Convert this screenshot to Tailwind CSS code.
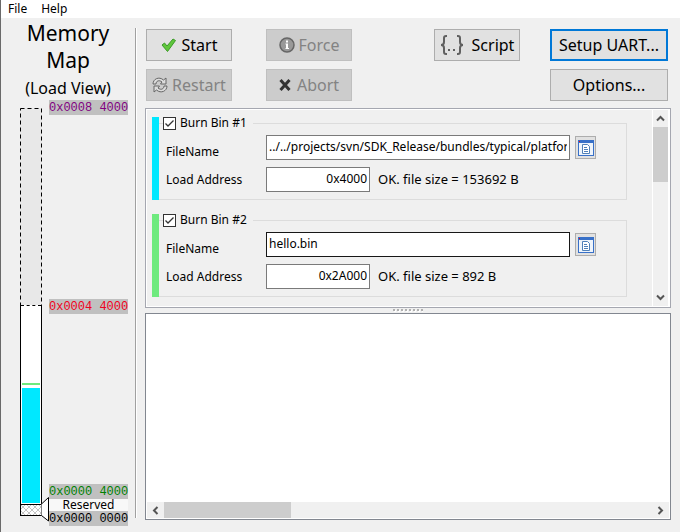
<!DOCTYPE html>
<html lang="en">
<head>
<meta charset="utf-8">
<title>Memory Map</title>
<script src="https://cdn.jsdelivr.net/npm/@tailwindcss/browser@4"></script>
</head>
<body class="flex h-screen flex-col border-l border-[#6a6a6a] bg-[#f0f0f0] font-['Noto_Sans','Noto_Sans_CJK_SC',sans-serif] text-xs text-black">
<nav class="flex h-[18px] shrink-0 items-center gap-3.5 bg-white px-[7px]">
  <button type="button">File</button>
  <button type="button">Help</button>
</nav>
<div class="flex min-h-0 flex-1">
  <aside class="flex w-[134px] shrink-0 flex-col pb-1.5">
    <header class="h-[82px] shrink-0 pt-0.5 text-center">
      <h1 class="text-[21px] leading-[27px]">Memory<br>Map</h1>
      <p class="text-base leading-7">(Load View)</p>
    </header>
    <div class="flex min-h-0 flex-1 pl-[19px]">
      <div class="relative mt-2 mb-[10px] flex w-[22px] flex-col">
        <svg class="min-h-0 w-full flex-[197] bg-[#e8e8e8]" aria-hidden="true"><rect x="0.5" y="0.5" width="21" height="400" fill="none" stroke="#000" stroke-dasharray="4 3"/></svg>
        <div class="flex min-h-0 flex-[199] flex-col border-x border-black bg-white px-px">
          <div class="-mx-px mb-auto border-t border-dashed border-black"></div>
          <div class="mb-[3px] h-0.5 bg-[#6eea7e]"></div>
          <div class="mb-px h-[115px] bg-[#00e8ff]"></div>
        </div>
        <svg class="h-3 w-full shrink-0" viewBox="0 0 22 12" aria-hidden="true">
          <rect x=".5" y=".5" width="21" height="11" fill="#fff" stroke="#000"/>
          <path d="M1 5l4-4M1 11L11 1M7 11L17 1M13 11l8-8M19 11l2-2M1 7l4 4M1 1l10 10M7 1l10 10M13 1l8 8M19 1l2 2" stroke="#b4b4b4" stroke-width=".8" fill="none"/>
        </svg>
        <svg class="absolute -bottom-1.5 left-[21px] h-[26px] w-2" viewBox="0 0 8 26" aria-hidden="true"><path d="M.5 8L7.500 1.500V25L.5 19.500" fill="#fff" stroke="#000"/></svg>
      </div>
      <div class="ml-[7px] flex w-[79px] flex-col font-['Liberation_Mono',monospace] leading-[14px] whitespace-nowrap">
        <div class="bg-[#c0c0c0] pt-px text-[#800080]">0x0008 4000</div>
        <div class="flex-[184]"></div>
        <div class="bg-[#c0c0c0] pt-px text-[#f00020]">0x0004 4000</div>
        <div class="flex-[170]"></div>
        <div class="bg-[#c0c0c0] pt-px text-[#008000]">0x0000 4000</div>
        <div class="h-3 bg-[#f8f8f8] text-center font-['Noto_Sans',sans-serif] leading-3">Reserved</div>
        <div class="bg-[#c0c0c0] pt-px">0x0000 0000</div>
      </div>
    </div>
  </aside>
  <div class="mt-2.5 mb-3.5 w-0.5 border-l border-[#a0a0a0] bg-white"></div>
  <main class="flex min-w-0 flex-1 flex-col pt-[11px] pr-[9px] pb-3 pl-2">
    <div class="mr-[3px] ml-px flex shrink-0 justify-between text-base">
      <div class="grid grid-cols-[86px_86px] gap-x-[34px] gap-y-2">
        <button type="button" class="flex h-8 items-center justify-center gap-1.5 border border-[#adadad] bg-[#e1e1e1]">
          <svg class="size-[15px]" viewBox="0 0 15 15" aria-hidden="true"><path d="M1 7l2.500-2L6 8l6-7 2.500 1.500L6.500 13.500z" fill="#5fc63b" stroke="#3b9a28"/></svg>Start</button>
        <button type="button" disabled class="flex h-8 items-center justify-center gap-1 border border-[#bfbfbf] bg-[#ccc] text-[#838383]">
          <svg class="size-4" viewBox="0 0 16 16" aria-hidden="true"><circle cx="8" cy="8" r="7" fill="#999" stroke="#666" stroke-width="1.500"/><path d="M7 3.500h2v2H7zM6.500 6.500H9V11h1v1H6.500v-1H7V7.500h-.5z" fill="#fff"/></svg>Force</button>
        <button type="button" disabled class="flex h-8 items-center justify-center gap-1 border border-[#bfbfbf] bg-[#ccc] text-[#838383]">
          <svg class="size-4" viewBox="0 0 16 16" fill="#ddd" stroke="#666" stroke-width="1" stroke-linejoin="round" aria-hidden="true"><path d="M1 7C1 2 7-1 11.500 3L14 1v6H8.500l1.500-2C7 2.500 4 4 4 7z"/><path d="M15 9c0 5-6 8-10.500 4L2 15V9h5.500L6 11c3 2.500 6 1 6-2z"/></svg>Restart</button>
        <button type="button" disabled class="flex h-8 items-center justify-center gap-1.5 border border-[#bfbfbf] bg-[#ccc] text-[#838383]">
          <svg class="size-3" viewBox="0 0 12 12" aria-hidden="true"><path d="M1.500 1l9 10M10.500 1l-9 10" stroke="#333" stroke-width="3"/></svg>Abort</button>
      </div>
      <div class="grid grid-cols-[86px_118px] gap-x-[30px] gap-y-2">
        <button type="button" class="flex h-8 items-center justify-center gap-2 border border-[#adadad] bg-[#e1e1e1]">
          <svg class="h-5 w-6" viewBox="0 0 24 20" fill="none" stroke="#606060" stroke-width="2" aria-hidden="true"><path d="M7 1H6Q4 1 4 3v4q0 3-3 3 3 0 3 3v4q0 2 2 2h1M17 1h1q2 0 2 2v4q0 3 3 3-3 0-3 3v4q0 2-2 2h-1M8 15h2M13 15h2"/></svg>Script</button>
        <button type="button" class="h-8 border-2 border-[#0078d7] bg-[#e1e1e1] leading-7">Setup UART...</button>
        <button type="button" class="col-start-2 h-8 border border-[#adadad] bg-[#e1e1e1]">Options...</button>
      </div>
    </div>
    <section class="mt-[7px] flex h-[200px] shrink-0 border border-[#a5a7b0] outline -outline-offset-2 outline-white">
      <div class="flex min-w-0 flex-1 flex-col gap-3.5 pt-2 pr-[25px] pl-1.5">
        <div class="flex h-[83px] border-l-[7px] border-[#00e8ff]">
          <fieldset class="relative mt-1.5 min-w-0 flex-1 border border-l-0 border-[#dcdcdc] pt-[11px] pl-[7px]">
            <label class="absolute -top-2.5 left-1 flex h-[18px] items-center gap-1 bg-[#f0f0f0] pr-1.5">
              <input type="checkbox" checked class="size-[13px] appearance-none border border-[#333] bg-white"><svg class="pointer-events-none absolute left-0 size-[13px]" viewBox="0 0 13 13" fill="none" stroke="#333" stroke-width="1.300" aria-hidden="true"><path d="M2.500 6.500L5 9l5.500-5.500"/></svg>Burn Bin #1</label>
            <div class="flex items-center pr-[30px]"><label for="f1" class="w-[100px] shrink-0 pt-2">FileName</label>
              <input id="f1" value="../../projects/svn/SDK_Release/bundles/typical/platform" class="h-[25px] min-w-0 flex-1 border border-[#7a7a7a] bg-white px-0.5 pb-0.5">
              <button type="button" aria-label="Browse" class="ml-[5px] flex h-[23px] w-[21px] items-center justify-center border border-[#adadad] bg-[#e1e1e1]"><svg class="size-4" viewBox="0 0 16 16" aria-hidden="true"><rect x=".5" y=".5" width="15" height="15" fill="#eef4fb" stroke="#3870c8"/><path d="M0 0h16v3H0z" fill="#3870c8"/><path d="M1 1h1v1H1z" fill="red"/><path d="M4.500 4.500h5l2 2v7h-7z" fill="#fff" stroke="#5080b8"/><path d="M6 7.500h3M6 9.500h4M6 11.500h4" stroke="#5080b8"/></svg></button></div>
            <div class="mt-[7px] flex items-center"><label for="a1" class="w-[100px] shrink-0">Load Address</label>
              <input id="a1" value="0x4000" class="h-[25px] w-[104px] border border-[#7a7a7a] bg-white px-0.5 pb-0.5 text-right"><span class="ml-2 text-[13px] whitespace-nowrap">OK. file size = 153692 B</span></div>
          </fieldset>
        </div>
        <div class="flex h-[83px] border-l-[7px] border-[#6eea7e]">
          <fieldset class="relative mt-1.5 min-w-0 flex-1 border border-l-0 border-[#dcdcdc] pt-[11px] pl-[7px]">
            <label class="absolute -top-2.5 left-1 flex h-[18px] items-center gap-1 bg-[#f0f0f0] pr-1.5">
              <input type="checkbox" checked class="size-[13px] appearance-none border border-[#333] bg-white"><svg class="pointer-events-none absolute left-0 size-[13px]" viewBox="0 0 13 13" fill="none" stroke="#333" stroke-width="1.300" aria-hidden="true"><path d="M2.500 6.500L5 9l5.500-5.500"/></svg>Burn Bin #2</label>
            <div class="flex items-center pr-[30px]"><label for="f2" class="w-[100px] shrink-0 pt-2">FileName</label>
              <input id="f2" value="hello.bin" class="h-[25px] min-w-0 flex-1 border border-[#171717] bg-white px-0.5 pb-0.5">
              <button type="button" aria-label="Browse" class="ml-[5px] flex h-[23px] w-[21px] items-center justify-center border border-[#adadad] bg-[#e1e1e1]"><svg class="size-4" viewBox="0 0 16 16" aria-hidden="true"><rect x=".5" y=".5" width="15" height="15" fill="#eef4fb" stroke="#3870c8"/><path d="M0 0h16v3H0z" fill="#3870c8"/><path d="M1 1h1v1H1z" fill="red"/><path d="M4.500 4.500h5l2 2v7h-7z" fill="#fff" stroke="#5080b8"/><path d="M6 7.500h3M6 9.500h4M6 11.500h4" stroke="#5080b8"/></svg></button></div>
            <div class="mt-[7px] flex items-center"><label for="a2" class="w-[100px] shrink-0">Load Address</label>
              <input id="a2" value="0x2A000" class="h-[25px] w-[104px] border border-[#7a7a7a] bg-white px-0.5 pb-0.5 text-right"><span class="ml-2 text-[13px] whitespace-nowrap">OK. file size = 892 B</span></div>
          </fieldset>
        </div>
      </div>
      <div class="my-px mr-px flex w-[17px] flex-col border-x border-white">
        <button type="button" aria-label="Scroll up" class="flex h-[17px] items-center justify-center"><svg class="h-[7px] w-[9px]" viewBox="0 0 9 7" aria-hidden="true"><path d="M1 5.500l3.500-3.500L8 5.500" fill="none" stroke="#555" stroke-width="2"/></svg></button>
        <div class="h-[55px] bg-[#cdcdcd]"></div>
        <button type="button" aria-label="Scroll down" class="mt-auto flex h-[17px] items-center justify-center"><svg class="h-[7px] w-[9px]" viewBox="0 0 9 7" aria-hidden="true"><path d="M1 1.500L4.500 5 8 1.500" fill="none" stroke="#555" stroke-width="2"/></svg></button>
      </div>
    </section>
    <div class="flex h-[5px] shrink-0 items-center justify-center"><svg class="h-[3px] w-[30px]" viewBox="0 0 30 3" aria-hidden="true"><path d="M1 2h30" stroke="#fff" stroke-width="2" stroke-dasharray="2 2"/><path d="M0 1h30" stroke="#b0b0b0" stroke-width="2" stroke-dasharray="2 2"/></svg></div>
    <section class="flex min-h-0 flex-1 flex-col border border-[#828790] bg-white p-px">
      <textarea aria-label="Log" class="block w-full flex-1 resize-none outline-none"></textarea>
      <div class="flex h-4 shrink-0 bg-[#f0f0f0]">
        <button type="button" aria-label="Scroll left" class="flex w-[17px] items-center justify-center"><svg class="h-[9px] w-[7px]" viewBox="0 0 7 9" aria-hidden="true"><path d="M5.500 1L2 4.500 5.500 8" fill="none" stroke="#555" stroke-width="2"/></svg></button>
        <div class="w-[127px] bg-[#cdcdcd]"></div>
        <button type="button" aria-label="Scroll right" class="ml-auto flex w-[17px] items-center justify-center"><svg class="h-[9px] w-[7px]" viewBox="0 0 7 9" aria-hidden="true"><path d="M1.500 1L5 4.500 1.500 8" fill="none" stroke="#555" stroke-width="2"/></svg></button>
      </div>
    </section>
  </main>
</div>
</body>
</html>
